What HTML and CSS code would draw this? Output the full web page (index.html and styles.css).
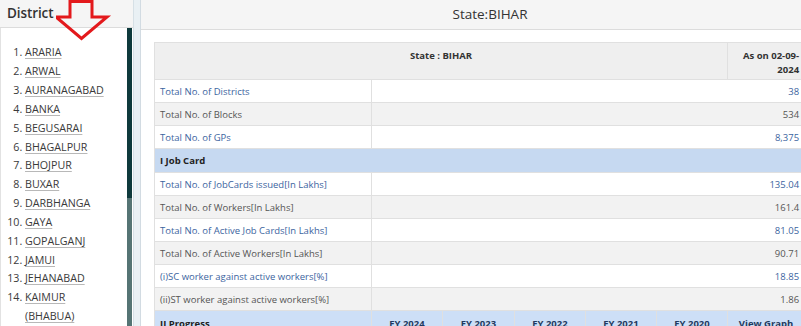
FILE: index.html
```html
<!DOCTYPE html>
<html>
<head>
<meta charset="utf-8">
<link rel="stylesheet" href="styles.css">
</head>
<body>
<div class="page">
  <aside class="sidebar">
    <div class="side-head">
      <span class="side-title">District</span>
      <svg class="arrow" width="60" height="42" viewBox="0 0 60 42">
        <path d="M14 1.5 H36 V17 H51 L25.5 38.5 L0 17 H14 Z" fill="none" stroke="#e3191c" stroke-width="3" stroke-linejoin="miter"/>
      </svg>
    </div>
    <div class="side-body">
      <ol class="dlist">
        <li><a>ARARIA</a></li>
        <li><a>ARWAL</a></li>
        <li><a>AURANAGABAD</a></li>
        <li><a>BANKA</a></li>
        <li><a>BEGUSARAI</a></li>
        <li><a>BHAGALPUR</a></li>
        <li><a>BHOJPUR</a></li>
        <li><a>BUXAR</a></li>
        <li><a>DARBHANGA</a></li>
        <li><a>GAYA</a></li>
        <li><a>GOPALGANJ</a></li>
        <li><a>JAMUI</a></li>
        <li><a>JEHANABAD</a></li>
        <li><a>KAIMUR<br>(BHABUA)</a></li>
      </ol>
      <div class="scrollbar"><div class="thumb"></div></div>
    </div>
  </aside>
  <div class="gutter"></div>
  <main class="main">
    <div class="main-head">State:BIHAR</div>
    <div class="content">
      <table class="report">
        <colgroup>
          <col class="c-label"><col class="c-fy"><col class="c-fy2"><col class="c-fy"><col class="c-fy"><col class="c-fy"><col class="c-last">
        </colgroup>
        <tr class="thead">
          <th colspan="6" class="t-state">State : BIHAR</th>
          <th class="t-date">As on 02-09-2024</th>
        </tr>
        <tr class="odd"><td class="lbl link">Total No. of Districts</td><td colspan="6" class="val link">38</td></tr>
        <tr class="even"><td class="lbl">Total No. of Blocks</td><td colspan="6" class="val">534</td></tr>
        <tr class="odd"><td class="lbl link">Total No. of GPs</td><td colspan="6" class="val link">8,375</td></tr>
        <tr class="section"><td colspan="7">I Job Card</td></tr>
        <tr class="odd"><td class="lbl link">Total No. of JobCards issued[In Lakhs]</td><td colspan="6" class="val link">135.04</td></tr>
        <tr class="even"><td class="lbl">Total No. of Workers[In Lakhs]</td><td colspan="6" class="val">161.4</td></tr>
        <tr class="odd"><td class="lbl link">Total No. of Active Job Cards[In Lakhs]</td><td colspan="6" class="val link">81.05</td></tr>
        <tr class="even"><td class="lbl">Total No. of Active Workers[In Lakhs]</td><td colspan="6" class="val">90.71</td></tr>
        <tr class="odd"><td class="lbl link">(i)SC worker against active workers[%]</td><td colspan="6" class="val link">18.85</td></tr>
        <tr class="even"><td class="lbl">(ii)ST worker against active workers[%]</td><td colspan="6" class="val">1.86</td></tr>
        <tr class="section prog">
          <td>II Progress</td><td class="fy">FY 2024</td><td class="fy">FY 2023</td><td class="fy">FY 2022</td><td class="fy">FY 2021</td><td class="fy">FY 2020</td><td class="fy">View Graph</td>
        </tr>
      </table>
    </div>
  </main>
</div>
</body>
</html>
```

FILE: styles.css
```css
html, body {
  margin: 0;
  padding: 0;
  background: #ffffff;
  overflow: hidden;
}
body {
  width: 801px;
  height: 326px;
  font-family: "Open Sans", "Noto Sans", sans-serif;
  color: #333;
}
.page {
  display: flex;
  height: 326px;
  overflow: hidden;
}
.sidebar {
  width: 133px;
  flex: 0 0 133px;
  display: flex;
  flex-direction: column;
  position: relative;
}
.side-head {
  background: #f5f5f5;
  border-bottom: 1px solid #dcdcdc;
  display: flex;
  align-items: center;
  padding-left: 7px;
  box-sizing: border-box;
  height: 30px;
}
.side-title {
  font-size: 13.5px;
  font-weight: 600;
  color: #333;
  letter-spacing: -0.1px;
  margin-top: -1px;
}
.arrow {
  position: absolute;
  left: 56px;
  top: 0;
}
.side-body {
  flex: 1;
  display: flex;
  background: #fff;
  border-left: 1px solid #e2e2e2;
}
.dlist {
  flex: 1;
  margin: 0;
  padding: 15px 0 0 24px;
  font-size: 10.7px;
  color: #3a3a3a;
  line-height: 18.85px;
}
.dlist li::marker {
  color: #3a3a3a;
}
.dlist a {
  color: #3a3a3a;
  text-decoration: underline;
  text-decoration-color: #b8b8b8;
  text-underline-offset: 2px;
}
.scrollbar {
  width: 5px;
  flex: 0 0 5px;
  background: #557474;
  margin-right: 1px;
  display: flex;
  flex-direction: column;
}
.thumb {
  height: 170px;
  background: #0e3a3c;
}
.gutter {
  width: 6px;
  flex: 0 0 6px;
  background: #e9f0f4;
  border-left: 1px solid #d6e0e6;
  border-right: 1px solid #d2dbe2;
}
.main {
  flex: 1;
  min-width: 0;
  display: flex;
  flex-direction: column;
}
.main-head {
  height: 30px;
  box-sizing: border-box;
  background: #f5f5f5;
  border-bottom: 1px solid #dcdcdc;
  text-align: center;
  font-size: 13.5px;
  line-height: 29px;
  color: #333;
  padding-left: 38px;
}
.content {
  padding: 12px 0 0 13px;
  overflow: hidden;
}
.report {
  border-collapse: collapse;
  width: 650px;
  table-layout: fixed;
  font-size: 9.5px;
}
.c-label { width: 217px; }
.c-fy { width: 71px; }
.c-fy2 { width: 72px; }
.c-last { width: 77px; }
.report td, .report th {
  border: 1px solid #e0e0e0;
  padding: 0 5px;
  height: 22px;
  box-sizing: border-box;
}
.thead th {
  background: #efefef;
  height: 37px;
  vertical-align: top;
  padding-top: 6px;
  font-weight: 700;
  color: #333;
}
.t-state {
  text-align: center;
  padding-left: 0;
}
.t-date {
  text-align: right;
  line-height: 14px;
}
.odd td { background: #fff; height: 23px; }
.even td { background: #f2f2f2; height: 23px; }
.lbl { color: #555; }
.val { text-align: right; color: #555; }
.link { color: #3c64a0; }
.section td {
  background: #c6d9f1;
  font-weight: 700;
  color: #222;
  height: 24px;
}
.prog td {
  background: #cddff7;
  vertical-align: top;
  padding-top: 6px;
}
.prog .fy {
  text-align: center;
  color: #1f3a60;
}
```
